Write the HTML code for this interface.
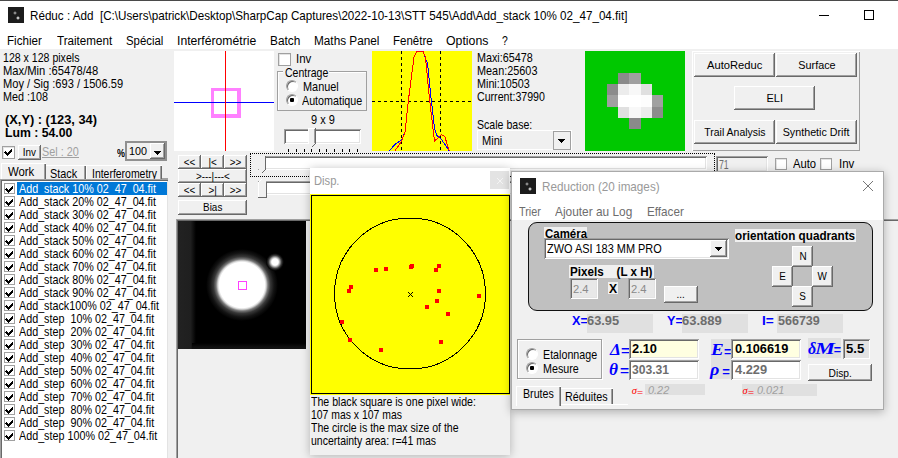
<!DOCTYPE html><html><head><meta charset="utf-8"><style>
*{margin:0;padding:0;box-sizing:border-box}
html,body{width:898px;height:458px;overflow:hidden;background:#f0f0f0;position:relative;font-family:"Liberation Sans",sans-serif;color:#000}
div,span,svg{position:absolute}
.t{white-space:pre;line-height:1}
.btn{background:#f0f0f0;box-shadow:inset -1px -1px #696969,inset 1px 1px #fff,inset -2px -2px #a0a0a0;display:flex;align-items:center;justify-content:center}
.btn span{position:relative;display:inline-block;white-space:pre;line-height:1}
.sunk{box-shadow:inset 1px 1px #a0a0a0,inset -1px -1px #fff,inset 2px 2px #696969,inset -2px -2px #e3e3e3}
.cb{background:#fff;border:1px solid #a0a0a0;box-shadow:inset 1px 1px #e3e3e3}
.rad{width:12px;height:12px;border-radius:6px;background:#fff;border:1px solid;border-color:#a0a0a0 #fff #fff #a0a0a0;box-shadow:inset 1px 1px #696969}
.etch{border:1px solid #a0a0a0;box-shadow:inset 1px 1px #fff,1px 1px #fff}
</style></head><body>
<div class="" style="left:0px;top:0px;width:898px;height:49px;background:#fff"></div>
<div class="" style="left:0px;top:0px;width:898px;height:1px;background:#4a4a4a"></div>
<div class="" style="left:8px;top:7px;width:16px;height:16px;background:#1c1c1c"></div>
<div style="left:12.8px;top:10.9px;width:4px;height:4px;border-radius:2px;background:radial-gradient(circle closest-side,#bbb,#666 60%,#1c1c1c)"></div>
<div style="left:15.5px;top:15.7px;width:4px;height:4px;border-radius:2px;background:radial-gradient(circle closest-side,#fff,#999 60%,#1c1c1c)"></div>
<div class="t" style="left:29.5px;top:10.00px;font-size:12.4px;transform:scaleX(0.94);transform-origin:0 0;">Réduc : Add  [C:\Users\patrick\Desktop\SharpCap Captures\2022-10-13\STT 545\Add\Add_stack 10% 02_47_04.fit]</div>
<div class="" style="left:819px;top:15px;width:10px;height:1px;background:#000"></div>
<div class="" style="left:864px;top:10px;width:10px;height:10px;border:1px solid #000"></div>
<div class="t" style="left:7.4px;top:35.09px;font-size:12.3px;transform:scaleX(0.943);transform-origin:0 0;">Fichier</div>
<div class="t" style="left:57.0px;top:35.09px;font-size:12.3px;transform:scaleX(0.9464);transform-origin:0 0;">Traitement</div>
<div class="t" style="left:126.0px;top:35.09px;font-size:12.3px;transform:scaleX(0.9246);transform-origin:0 0;">Spécial</div>
<div class="t" style="left:177.2px;top:35.09px;font-size:12.3px;transform:scaleX(0.9903);transform-origin:0 0;">Interférométrie</div>
<div class="t" style="left:270.2px;top:35.09px;font-size:12.3px;transform:scaleX(0.9634);transform-origin:0 0;">Batch</div>
<div class="t" style="left:314px;top:35.09px;font-size:12.3px;transform:scaleX(0.9581);transform-origin:0 0;">Maths Panel</div>
<div class="t" style="left:393.3px;top:35.09px;font-size:12.3px;transform:scaleX(0.9343);transform-origin:0 0;">Fenêtre</div>
<div class="t" style="left:446.3px;top:35.09px;font-size:12.3px;transform:scaleX(1.0003);transform-origin:0 0;">Options</div>
<div class="t" style="left:502px;top:35.09px;font-size:12.3px;transform:scaleX(0.848);transform-origin:0 0;">?</div>
<div class="t" style="left:3px;top:52.17px;font-size:12.2px;transform:scaleX(0.8677);transform-origin:0 0;">128 x 128 pixels</div>
<div class="t" style="left:3px;top:65.17px;font-size:12.2px;transform:scaleX(0.9185);transform-origin:0 0;">Max/Min :65478/48</div>
<div class="t" style="left:3px;top:78.17px;font-size:12.2px;transform:scaleX(0.9089);transform-origin:0 0;">Moy / Sig :693 / 1506.59</div>
<div class="t" style="left:3px;top:91.17px;font-size:12.2px;transform:scaleX(0.8847);transform-origin:0 0;">Med :108</div>
<div class="t" style="left:4.8px;top:113.83px;font-size:12.6px;transform:scaleX(1.0186);transform-origin:0 0;font-weight:bold">(X,Y) : (123, 34)</div>
<div class="t" style="left:5.1px;top:126.83px;font-size:12.6px;transform:scaleX(0.9723);transform-origin:0 0;font-weight:bold">Lum : 54.00</div>
<div class="cb" style="left:2px;top:146px;width:13px;height:13px"><svg width="9" height="9" viewBox="0 0 9 9" style="position:absolute;left:1px;top:0px" shape-rendering="crispEdges"><path d="M1 4h1v1h1v1h1v-1h1v-1h1v-1h1v-1h1v3h-1v1h-1v1h-1v1h-1v1h-1v-1h-1v-1h-1v-1h-1z" fill="#000"/></svg></div>
<div class="btn" style="left:18px;top:145px;width:23px;height:15px;"><span style="font-size:11px;transform:scaleX(0.9);position:relative;top:0px;">Inv</span></div>
<div class="t" style="left:42.3px;top:146.17px;font-size:12.2px;transform:scaleX(0.8871);transform-origin:0 0;color:#a0a0a0">Sel : 20</div>
<div class="" style="left:42px;top:157px;width:37px;height:1px;background:#a0a0a0"></div>
<div class="t" style="left:116.5px;top:147.61px;font-size:10.5px;transform:scaleX(0.85);transform-origin:0 0;font-weight:bold">%</div>
<div class="" style="left:125px;top:141px;width:42px;height:20px;background:#f0f0f0;box-shadow:inset 2px 2px #909090,inset -2px -2px #909090"></div>
<div class="t" style="left:128.7px;top:145.85px;font-size:11.4px;transform:scaleX(0.9465);transform-origin:0 0;">100</div>
<div class="" style="left:150px;top:143px;width:15px;height:16px;background:#f0f0f0;box-shadow:inset -1px -1px #696969,inset 1px 1px #fff,inset -2px -2px #a0a0a0"></div>
<svg style="left:154px;top:151px" width="7" height="4" viewBox="0 0 7 4" shape-rendering="crispEdges"><path d="M0 0h7v1h-1v1h-1v1h-1v1h-1v-1h-1v-1h-1v-1h-1z"/></svg>
<div style="left:45px;top:165px;width:41px;height:15px;background:#f0f0f0;box-shadow:inset 1px 1px #fff,inset -1px 0 #696969,inset -2px 0 #a0a0a0"></div>
<div class="t" style="left:50.3px;top:168.17px;font-size:12.2px;transform:scaleX(0.8915);transform-origin:0 0;">Stack</div>
<div style="left:86px;top:165px;width:76px;height:15px;background:#f0f0f0;box-shadow:inset 1px 1px #fff,inset -1px 0 #696969,inset -2px 0 #a0a0a0"></div>
<div class="t" style="left:91.9px;top:168.17px;font-size:12.2px;transform:scaleX(0.8574);transform-origin:0 0;">Interferometry</div>
<div style="left:162px;top:178px;width:6px;height:1px;background:#a0a0a0"></div>
<div style="left:1px;top:163px;width:45px;height:17px;background:#f0f0f0;box-shadow:inset 1px 1px #fff,inset -1px 0 #696969,inset -2px 0 #a0a0a0"></div>
<div class="t" style="left:8.1px;top:166.17px;font-size:12.2px;transform:scaleX(0.9313);transform-origin:0 0;">Work</div>
<div style="left:0px;top:179px;width:168px;height:290px;background:#fff;box-shadow:inset 1px 1px #a0a0a0,inset 2px 2px #696969,inset -1px 0 #e3e3e3"></div>
<div class="" style="left:17px;top:182px;width:150px;height:13px;background:#0078d7"></div>
<div style="left:4px;top:183px;width:11px;height:11px;background:#fff;border:1px solid #a0a0a0"><svg width="9" height="9" viewBox="0 0 9 9" style="position:absolute;left:0px;top:0px" shape-rendering="crispEdges"><path d="M1 4h1v1h1v1h1v-1h1v-1h1v-1h1v-1h1v3h-1v1h-1v1h-1v1h-1v1h-1v-1h-1v-1h-1v-1h-1z" fill="#000"/></svg></div>
<div class="t" style="left:18.6px;top:183.17px;font-size:12.2px;transform:scaleX(0.8827);transform-origin:0 0;color:#fff">Add_stack 10% 02_47_04.fit</div>
<div style="left:4px;top:196px;width:11px;height:11px;background:#fff;border:1px solid #a0a0a0"><svg width="9" height="9" viewBox="0 0 9 9" style="position:absolute;left:0px;top:0px" shape-rendering="crispEdges"><path d="M1 4h1v1h1v1h1v-1h1v-1h1v-1h1v-1h1v3h-1v1h-1v1h-1v1h-1v1h-1v-1h-1v-1h-1v-1h-1z" fill="#000"/></svg></div>
<div class="t" style="left:18.6px;top:196.17px;font-size:12.2px;transform:scaleX(0.8827);transform-origin:0 0;color:#000">Add_stack 20% 02_47_04.fit</div>
<div style="left:4px;top:209px;width:11px;height:11px;background:#fff;border:1px solid #a0a0a0"><svg width="9" height="9" viewBox="0 0 9 9" style="position:absolute;left:0px;top:0px" shape-rendering="crispEdges"><path d="M1 4h1v1h1v1h1v-1h1v-1h1v-1h1v-1h1v3h-1v1h-1v1h-1v1h-1v1h-1v-1h-1v-1h-1v-1h-1z" fill="#000"/></svg></div>
<div class="t" style="left:18.6px;top:209.17px;font-size:12.2px;transform:scaleX(0.8827);transform-origin:0 0;color:#000">Add_stack 30% 02_47_04.fit</div>
<div style="left:4px;top:222px;width:11px;height:11px;background:#fff;border:1px solid #a0a0a0"><svg width="9" height="9" viewBox="0 0 9 9" style="position:absolute;left:0px;top:0px" shape-rendering="crispEdges"><path d="M1 4h1v1h1v1h1v-1h1v-1h1v-1h1v-1h1v3h-1v1h-1v1h-1v1h-1v1h-1v-1h-1v-1h-1v-1h-1z" fill="#000"/></svg></div>
<div class="t" style="left:18.6px;top:222.17px;font-size:12.2px;transform:scaleX(0.8827);transform-origin:0 0;color:#000">Add_stack 40% 02_47_04.fit</div>
<div style="left:4px;top:235px;width:11px;height:11px;background:#fff;border:1px solid #a0a0a0"><svg width="9" height="9" viewBox="0 0 9 9" style="position:absolute;left:0px;top:0px" shape-rendering="crispEdges"><path d="M1 4h1v1h1v1h1v-1h1v-1h1v-1h1v-1h1v3h-1v1h-1v1h-1v1h-1v1h-1v-1h-1v-1h-1v-1h-1z" fill="#000"/></svg></div>
<div class="t" style="left:18.6px;top:235.17px;font-size:12.2px;transform:scaleX(0.8827);transform-origin:0 0;color:#000">Add_stack 50% 02_47_04.fit</div>
<div style="left:4px;top:248px;width:11px;height:11px;background:#fff;border:1px solid #a0a0a0"><svg width="9" height="9" viewBox="0 0 9 9" style="position:absolute;left:0px;top:0px" shape-rendering="crispEdges"><path d="M1 4h1v1h1v1h1v-1h1v-1h1v-1h1v-1h1v3h-1v1h-1v1h-1v1h-1v1h-1v-1h-1v-1h-1v-1h-1z" fill="#000"/></svg></div>
<div class="t" style="left:18.6px;top:248.17px;font-size:12.2px;transform:scaleX(0.8827);transform-origin:0 0;color:#000">Add_stack 60% 02_47_04.fit</div>
<div style="left:4px;top:261px;width:11px;height:11px;background:#fff;border:1px solid #a0a0a0"><svg width="9" height="9" viewBox="0 0 9 9" style="position:absolute;left:0px;top:0px" shape-rendering="crispEdges"><path d="M1 4h1v1h1v1h1v-1h1v-1h1v-1h1v-1h1v3h-1v1h-1v1h-1v1h-1v1h-1v-1h-1v-1h-1v-1h-1z" fill="#000"/></svg></div>
<div class="t" style="left:18.6px;top:261.17px;font-size:12.2px;transform:scaleX(0.8827);transform-origin:0 0;color:#000">Add_stack 70% 02_47_04.fit</div>
<div style="left:4px;top:274px;width:11px;height:11px;background:#fff;border:1px solid #a0a0a0"><svg width="9" height="9" viewBox="0 0 9 9" style="position:absolute;left:0px;top:0px" shape-rendering="crispEdges"><path d="M1 4h1v1h1v1h1v-1h1v-1h1v-1h1v-1h1v3h-1v1h-1v1h-1v1h-1v1h-1v-1h-1v-1h-1v-1h-1z" fill="#000"/></svg></div>
<div class="t" style="left:18.6px;top:274.17px;font-size:12.2px;transform:scaleX(0.8827);transform-origin:0 0;color:#000">Add_stack 80% 02_47_04.fit</div>
<div style="left:4px;top:287px;width:11px;height:11px;background:#fff;border:1px solid #a0a0a0"><svg width="9" height="9" viewBox="0 0 9 9" style="position:absolute;left:0px;top:0px" shape-rendering="crispEdges"><path d="M1 4h1v1h1v1h1v-1h1v-1h1v-1h1v-1h1v3h-1v1h-1v1h-1v1h-1v1h-1v-1h-1v-1h-1v-1h-1z" fill="#000"/></svg></div>
<div class="t" style="left:18.6px;top:287.17px;font-size:12.2px;transform:scaleX(0.8827);transform-origin:0 0;color:#000">Add_stack 90% 02_47_04.fit</div>
<div style="left:4px;top:300px;width:11px;height:11px;background:#fff;border:1px solid #a0a0a0"><svg width="9" height="9" viewBox="0 0 9 9" style="position:absolute;left:0px;top:0px" shape-rendering="crispEdges"><path d="M1 4h1v1h1v1h1v-1h1v-1h1v-1h1v-1h1v3h-1v1h-1v1h-1v1h-1v1h-1v-1h-1v-1h-1v-1h-1z" fill="#000"/></svg></div>
<div class="t" style="left:18.6px;top:300.17px;font-size:12.2px;transform:scaleX(0.8827);transform-origin:0 0;color:#000">Add_stack100% 02_47_04.fit</div>
<div style="left:4px;top:313px;width:11px;height:11px;background:#fff;border:1px solid #a0a0a0"><svg width="9" height="9" viewBox="0 0 9 9" style="position:absolute;left:0px;top:0px" shape-rendering="crispEdges"><path d="M1 4h1v1h1v1h1v-1h1v-1h1v-1h1v-1h1v3h-1v1h-1v1h-1v1h-1v1h-1v-1h-1v-1h-1v-1h-1z" fill="#000"/></svg></div>
<div class="t" style="left:18.6px;top:313.17px;font-size:12.2px;transform:scaleX(0.8827);transform-origin:0 0;color:#000">Add_step  10% 02_47_04.fit</div>
<div style="left:4px;top:326px;width:11px;height:11px;background:#fff;border:1px solid #a0a0a0"><svg width="9" height="9" viewBox="0 0 9 9" style="position:absolute;left:0px;top:0px" shape-rendering="crispEdges"><path d="M1 4h1v1h1v1h1v-1h1v-1h1v-1h1v-1h1v3h-1v1h-1v1h-1v1h-1v1h-1v-1h-1v-1h-1v-1h-1z" fill="#000"/></svg></div>
<div class="t" style="left:18.6px;top:326.17px;font-size:12.2px;transform:scaleX(0.8827);transform-origin:0 0;color:#000">Add_step  20% 02_47_04.fit</div>
<div style="left:4px;top:339px;width:11px;height:11px;background:#fff;border:1px solid #a0a0a0"><svg width="9" height="9" viewBox="0 0 9 9" style="position:absolute;left:0px;top:0px" shape-rendering="crispEdges"><path d="M1 4h1v1h1v1h1v-1h1v-1h1v-1h1v-1h1v3h-1v1h-1v1h-1v1h-1v1h-1v-1h-1v-1h-1v-1h-1z" fill="#000"/></svg></div>
<div class="t" style="left:18.6px;top:339.17px;font-size:12.2px;transform:scaleX(0.8827);transform-origin:0 0;color:#000">Add_step  30% 02_47_04.fit</div>
<div style="left:4px;top:352px;width:11px;height:11px;background:#fff;border:1px solid #a0a0a0"><svg width="9" height="9" viewBox="0 0 9 9" style="position:absolute;left:0px;top:0px" shape-rendering="crispEdges"><path d="M1 4h1v1h1v1h1v-1h1v-1h1v-1h1v-1h1v3h-1v1h-1v1h-1v1h-1v1h-1v-1h-1v-1h-1v-1h-1z" fill="#000"/></svg></div>
<div class="t" style="left:18.6px;top:352.17px;font-size:12.2px;transform:scaleX(0.8827);transform-origin:0 0;color:#000">Add_step  40% 02_47_04.fit</div>
<div style="left:4px;top:365px;width:11px;height:11px;background:#fff;border:1px solid #a0a0a0"><svg width="9" height="9" viewBox="0 0 9 9" style="position:absolute;left:0px;top:0px" shape-rendering="crispEdges"><path d="M1 4h1v1h1v1h1v-1h1v-1h1v-1h1v-1h1v3h-1v1h-1v1h-1v1h-1v1h-1v-1h-1v-1h-1v-1h-1z" fill="#000"/></svg></div>
<div class="t" style="left:18.6px;top:365.17px;font-size:12.2px;transform:scaleX(0.8827);transform-origin:0 0;color:#000">Add_step  50% 02_47_04.fit</div>
<div style="left:4px;top:378px;width:11px;height:11px;background:#fff;border:1px solid #a0a0a0"><svg width="9" height="9" viewBox="0 0 9 9" style="position:absolute;left:0px;top:0px" shape-rendering="crispEdges"><path d="M1 4h1v1h1v1h1v-1h1v-1h1v-1h1v-1h1v3h-1v1h-1v1h-1v1h-1v1h-1v-1h-1v-1h-1v-1h-1z" fill="#000"/></svg></div>
<div class="t" style="left:18.6px;top:378.17px;font-size:12.2px;transform:scaleX(0.8827);transform-origin:0 0;color:#000">Add_step  60% 02_47_04.fit</div>
<div style="left:4px;top:391px;width:11px;height:11px;background:#fff;border:1px solid #a0a0a0"><svg width="9" height="9" viewBox="0 0 9 9" style="position:absolute;left:0px;top:0px" shape-rendering="crispEdges"><path d="M1 4h1v1h1v1h1v-1h1v-1h1v-1h1v-1h1v3h-1v1h-1v1h-1v1h-1v1h-1v-1h-1v-1h-1v-1h-1z" fill="#000"/></svg></div>
<div class="t" style="left:18.6px;top:391.17px;font-size:12.2px;transform:scaleX(0.8827);transform-origin:0 0;color:#000">Add_step  70% 02_47_04.fit</div>
<div style="left:4px;top:404px;width:11px;height:11px;background:#fff;border:1px solid #a0a0a0"><svg width="9" height="9" viewBox="0 0 9 9" style="position:absolute;left:0px;top:0px" shape-rendering="crispEdges"><path d="M1 4h1v1h1v1h1v-1h1v-1h1v-1h1v-1h1v3h-1v1h-1v1h-1v1h-1v1h-1v-1h-1v-1h-1v-1h-1z" fill="#000"/></svg></div>
<div class="t" style="left:18.6px;top:404.17px;font-size:12.2px;transform:scaleX(0.8827);transform-origin:0 0;color:#000">Add_step  80% 02_47_04.fit</div>
<div style="left:4px;top:417px;width:11px;height:11px;background:#fff;border:1px solid #a0a0a0"><svg width="9" height="9" viewBox="0 0 9 9" style="position:absolute;left:0px;top:0px" shape-rendering="crispEdges"><path d="M1 4h1v1h1v1h1v-1h1v-1h1v-1h1v-1h1v3h-1v1h-1v1h-1v1h-1v1h-1v-1h-1v-1h-1v-1h-1z" fill="#000"/></svg></div>
<div class="t" style="left:18.6px;top:417.17px;font-size:12.2px;transform:scaleX(0.8827);transform-origin:0 0;color:#000">Add_step  90% 02_47_04.fit</div>
<div style="left:4px;top:430px;width:11px;height:11px;background:#fff;border:1px solid #a0a0a0"><svg width="9" height="9" viewBox="0 0 9 9" style="position:absolute;left:0px;top:0px" shape-rendering="crispEdges"><path d="M1 4h1v1h1v1h1v-1h1v-1h1v-1h1v-1h1v3h-1v1h-1v1h-1v1h-1v1h-1v-1h-1v-1h-1v-1h-1z" fill="#000"/></svg></div>
<div class="t" style="left:18.6px;top:430.17px;font-size:12.2px;transform:scaleX(0.8827);transform-origin:0 0;color:#000">Add_step 100% 02_47_04.fit</div>
<div class="" style="left:174px;top:51px;width:100px;height:100px;background:#fff"></div>
<div class="" style="left:211px;top:88px;width:30px;height:30px;border:3px solid #ff80ff;border-right-width:4px;border-bottom-width:4px"></div>
<div class="" style="left:174px;top:102px;width:100px;height:1px;background:#0000ff"></div>
<div class="" style="left:225px;top:51px;width:1px;height:100px;background:#ff0000"></div>
<div class="cb" style="left:278px;top:53px;width:13px;height:13px"></div>
<div class="t" style="left:296.2px;top:52.77px;font-size:12.2px;transform:scaleX(0.9402);transform-origin:0 0;">Inv</div>
<div class="" style="left:277px;top:71px;width:90px;height:40px;border:1px solid #a0a0a0;box-shadow:inset 1px 1px #fff"></div>
<div class="" style="left:283px;top:69px;width:46px;height:10px;background:#f0f0f0"></div>
<div class="t" style="left:285.2px;top:67.17px;font-size:12.2px;transform:scaleX(0.8628);transform-origin:0 0;">Centrage</div>
<div class="rad" style="left:286px;top:80px"></div>
<div class="t" style="left:303.2px;top:81.17px;font-size:12.2px;transform:scaleX(0.8948);transform-origin:0 0;">Manuel</div>
<div class="rad" style="left:286px;top:94px"><div style="position:absolute;left:3px;top:3px;width:4px;height:4px;border-radius:1px;background:#000"></div></div>
<div class="t" style="left:302.3px;top:95.17px;font-size:12.2px;transform:scaleX(0.8804);transform-origin:0 0;">Automatique</div>
<div class="t" style="left:311.1px;top:113.57px;font-size:12.2px;transform:scaleX(0.8999);transform-origin:0 0;">9 x 9</div>
<div class="sunk" style="left:284px;top:129px;width:77px;height:15px;background:#fff;"></div>
<div style="left:308px;top:128px;width:9px;height:20px"><svg width="9" height="20" viewBox="0 0 9 20" style="position:static" shape-rendering="crispEdges"><path d="M0 0h8v15l-4 4l-4-4z" fill="#f0f0f0"/><path d="M0 0h7v1h-6v14h-1z" fill="#fff"/><path d="M6 1h1v14h-1z" fill="#a0a0a0"/><path d="M7 0h1v15l-4 4h-1l4-4z" fill="#696969"/></svg></div>
<div class="" style="left:288px;top:149px;width:1px;height:3px;background:#000"></div>
<div class="" style="left:296px;top:149px;width:1px;height:3px;background:#000"></div>
<div class="" style="left:304px;top:149px;width:1px;height:3px;background:#000"></div>
<div class="" style="left:311px;top:149px;width:1px;height:3px;background:#000"></div>
<div class="" style="left:319px;top:149px;width:1px;height:3px;background:#000"></div>
<div class="" style="left:326px;top:149px;width:1px;height:3px;background:#000"></div>
<div class="" style="left:334px;top:149px;width:1px;height:3px;background:#000"></div>
<div class="" style="left:342px;top:149px;width:1px;height:3px;background:#000"></div>
<div class="" style="left:349px;top:149px;width:1px;height:3px;background:#000"></div>
<div class="" style="left:357px;top:149px;width:1px;height:3px;background:#000"></div>
<svg style="left:372px;top:51px" width="100" height="100" viewBox="372 51 100 100">
<rect x="372" y="51" width="100" height="100" fill="#ffff00"/>
<line x1="372" y1="101.5" x2="472" y2="101.5" stroke="#000" stroke-dasharray="3 3"/>
<line x1="401.5" y1="51" x2="401.5" y2="151" stroke="#000" stroke-dasharray="3 3" stroke-dashoffset="-42"/>
<line x1="440.5" y1="51" x2="440.5" y2="151" stroke="#000" stroke-dasharray="3 3" stroke-dashoffset="-42"/>
<polyline fill="none" stroke="#0000ff" stroke-width="1" shape-rendering="crispEdges" points="389,151 396,143.5 401.6,140 405,132 408.4,100.3 414,57 416.4,51.8 423.2,51.8 427.6,64 430.5,93 434.4,127.5 436.7,135.5 441.2,139 449.3,151"/>
<polyline fill="none" stroke="#ff0000" stroke-width="1" shape-rendering="crispEdges" points="394.8,151 401.6,141.2 405,132 408.4,100.3 414,57 416.4,51.8 423.2,51.8 425.5,57 428.9,93.5 431,111.6 434.5,141.2 441.4,134.4 444.8,136.6 449.3,151"/>
</svg>
<div class="t" style="left:477.1px;top:51.57px;font-size:12.2px;transform:scaleX(0.8848);transform-origin:0 0;">Maxi:65478</div>
<div class="t" style="left:477.1px;top:64.67px;font-size:12.2px;transform:scaleX(0.892);transform-origin:0 0;">Mean:25603</div>
<div class="t" style="left:477.1px;top:77.77px;font-size:12.2px;transform:scaleX(0.8847);transform-origin:0 0;">Mini:10503</div>
<div class="t" style="left:477.1px;top:90.87px;font-size:12.2px;transform:scaleX(0.8719);transform-origin:0 0;">Current:37990</div>
<div class="t" style="left:477.1px;top:118.77px;font-size:12.2px;transform:scaleX(0.8675);transform-origin:0 0;">Scale base:</div>
<div class="" style="left:477px;top:130px;width:95px;height:20px;background:#f0f0f0;border:1px solid #fff"></div>
<div class="t" style="left:481.6px;top:135.17px;font-size:12.2px;transform:scaleX(0.9075);transform-origin:0 0;">Mini</div>
<div class="" style="left:553px;top:131px;width:18px;height:19px;border:1px solid #a0a0a0;background:#f0f0f0"></div>
<svg style="left:558px;top:139px" width="7" height="4" viewBox="0 0 7 4" shape-rendering="crispEdges"><path d="M0 0h7v1h-1v1h-1v1h-1v1h-1v-1h-1v-1h-1v-1h-1z"/></svg>
<div class="" style="left:585px;top:51px;width:100px;height:100px;background:#00c800"></div>
<div class="" style="left:618px;top:73px;width:11px;height:11px;background:#8a8a8a"></div>
<div class="" style="left:629px;top:73px;width:12px;height:11px;background:#a0a0a0"></div>
<div class="" style="left:607px;top:84px;width:11px;height:11px;background:#8c8c8c"></div>
<div class="" style="left:618px;top:84px;width:11px;height:11px;background:#ececec"></div>
<div class="" style="left:629px;top:84px;width:12px;height:11px;background:#f8f8f8"></div>
<div class="" style="left:641px;top:84px;width:11px;height:11px;background:#e0e0e0"></div>
<div class="" style="left:607px;top:95px;width:11px;height:12px;background:#a0a0a0"></div>
<div class="" style="left:618px;top:95px;width:11px;height:12px;background:#fff"></div>
<div class="" style="left:629px;top:95px;width:12px;height:12px;background:#fff"></div>
<div class="" style="left:641px;top:95px;width:11px;height:12px;background:#fdfdfd"></div>
<div class="" style="left:652px;top:95px;width:11px;height:12px;background:#a0a0a0"></div>
<div class="" style="left:618px;top:107px;width:11px;height:11px;background:#e0e0e0"></div>
<div class="" style="left:629px;top:107px;width:12px;height:11px;background:#f8f8f8"></div>
<div class="" style="left:641px;top:107px;width:11px;height:11px;background:#ececec"></div>
<div class="" style="left:652px;top:107px;width:11px;height:11px;background:#8c8c8c"></div>
<div class="" style="left:629px;top:118px;width:12px;height:11px;background:#8a8a8a"></div>
<div class="" style="left:692px;top:51px;width:168px;height:100px;box-shadow:inset 1px 1px #fff,inset -1px -1px #a0a0a0"></div>
<div class="btn" style="left:694px;top:53px;width:81px;height:24px;"><span style="font-size:11.6px;transform:scaleX(0.9653);position:relative;top:0px;">AutoReduc</span></div>
<div class="btn" style="left:776px;top:53px;width:81px;height:24px;"><span style="font-size:11.6px;transform:scaleX(0.9331);position:relative;top:0px;">Surface</span></div>
<div class="btn" style="left:734px;top:86px;width:81px;height:24px;"><span style="font-size:11.6px;transform:scaleX(0.9477);position:relative;top:0px;">ELI</span></div>
<div class="btn" style="left:694px;top:120px;width:81px;height:24px;"><span style="font-size:11.6px;transform:scaleX(0.9028);position:relative;top:0px;">Trail Analysis</span></div>
<div class="btn" style="left:776px;top:120px;width:81px;height:24px;"><span style="font-size:11.6px;transform:scaleX(0.9252);position:relative;top:0px;">Synthetic Drift</span></div>
<div class="btn" style="left:178px;top:155px;width:23px;height:14px;"><span style="font-size:11px;transform:scaleX(0.9);position:relative;top:0px;">&lt;&lt;</span></div>
<div class="btn" style="left:201px;top:155px;width:23px;height:14px;"><span style="font-size:11px;transform:scaleX(0.9);position:relative;top:0px;">|&lt;</span></div>
<div class="btn" style="left:224px;top:155px;width:23px;height:14px;"><span style="font-size:11px;transform:scaleX(0.9);position:relative;top:0px;">&gt;&gt;</span></div>
<div class="btn" style="left:178px;top:169px;width:69px;height:14px;"><span style="font-size:11px;transform:scaleX(0.9);position:relative;top:0px;">&gt;---|---&lt;</span></div>
<div class="btn" style="left:178px;top:183px;width:23px;height:14px;"><span style="font-size:11px;transform:scaleX(0.9);position:relative;top:0px;">&lt;&lt;</span></div>
<div class="btn" style="left:201px;top:183px;width:23px;height:14px;"><span style="font-size:11px;transform:scaleX(0.9);position:relative;top:0px;">&gt;|</span></div>
<div class="btn" style="left:224px;top:183px;width:23px;height:14px;"><span style="font-size:11px;transform:scaleX(0.9);position:relative;top:0px;">&gt;&gt;</span></div>
<div class="btn" style="left:178px;top:200px;width:69px;height:15px;"><span style="font-size:11px;transform:scaleX(0.9);position:relative;top:0px;">Bias</span></div>
<div class="" style="left:250px;top:153px;width:465px;height:24px;border:1px dotted #000"></div>
<div class="sunk" style="left:258px;top:156px;width:449px;height:14px;background:#fff;"></div>
<div class="sunk" style="left:258px;top:181px;width:449px;height:14px;background:#fff;"></div>
<svg style="left:258px;top:156px" width="9" height="42" viewBox="0 0 9 42" shape-rendering="crispEdges"><path d="M0 0h8v13l-4 4l-4-4z" fill="#f0f0f0"/><path d="M7 0h1v13l-4 4h-1l4-4z" fill="#696969"/><path d="M4 22l4 4v15h-8v-15z" fill="#f0f0f0"/><path d="M4 22l4 4v15h-8v1h9v-16z" fill="#696969"/><path d="M0 26l4-4v1l-3 3v15h-1z" fill="#fff"/></svg>
<div class="sunk" style="left:716px;top:156px;width:52px;height:16px;background:#f0f0f0;"></div>
<div class="t" style="left:719px;top:159.17px;font-size:12.2px;transform:scaleX(0.7149);transform-origin:0 0;color:#6d6d6d">71</div>
<div class="cb" style="left:775px;top:158px;width:12px;height:12px"></div>
<div class="t" style="left:792.8px;top:158.17px;font-size:12.2px;transform:scaleX(0.9205);transform-origin:0 0;">Auto</div>
<div class="cb" style="left:820px;top:158px;width:12px;height:12px"></div>
<div class="t" style="left:838.6px;top:158.17px;font-size:12.2px;transform:scaleX(0.9402);transform-origin:0 0;">Inv</div>
<div style="left:176px;top:219px;width:730px;height:240px;box-shadow:inset 1px 1px #a0a0a0,inset 2px 2px #696969"></div>
<div style="left:178px;top:221px;width:128px;height:128px;background:#000;overflow:hidden">
<div style="left:0;top:0;width:18px;height:128px;background:linear-gradient(90deg,#222 0,#1f1f1f 70%,#000 100%)"></div>
<div style="left:14px;top:122px;width:114px;height:6px;background:linear-gradient(180deg,#000,#111 70%,#131313)"></div>
<div style="left:28px;top:28px;width:72px;height:72px;border-radius:50%;background:radial-gradient(circle closest-side,#fff 0,#fff 63%,#d8d8d8 67%,#787878 72%,#383838 79%,#141414 89%,#000 100%)"></div>
<div style="left:88px;top:32px;width:18px;height:18px;border-radius:50%;background:radial-gradient(circle closest-side,#fff 0,#fff 36%,#b0b0b0 52%,#404040 72%,#101010 88%,#000 100%)"></div>
<div style="left:60px;top:60px;width:9px;height:9px;border:1px solid #ff40ff"></div>
</div>
<div style="left:310px;top:168px;width:200px;height:287px;background:#f0f0f0;box-shadow:0 1px 9px rgba(0,0,0,0.26)"></div>
<div class="" style="left:310px;top:168px;width:200px;height:26px;background:#fff"></div>
<div class="t" style="left:313.5px;top:175.00px;font-size:12.4px;transform:scaleX(0.9026);transform-origin:0 0;color:#999">Disp.</div>
<div class="" style="left:490px;top:171px;width:19px;height:18px;background:#e3e3e3"></div>
<svg style="left:496px;top:177px" width="8" height="8" viewBox="0 0 8 8"><path d="M1 1l6 6M7 1l-6 6" stroke="#f4f4f4" stroke-width="1"/></svg>
<svg style="left:310px;top:194px" width="201" height="201" viewBox="310 194 201 201" shape-rendering="crispEdges">
<rect x="310" y="194" width="200" height="201" fill="#ffff00"/>
<rect x="311.5" y="195.5" width="198" height="198" fill="#ffff00" stroke="#000"/>
<circle cx="410" cy="293.5" r="75.5" fill="none" stroke="#000" stroke-width="1"/>
<path d="M408 292l5 5M413 292l-5 5" stroke="#000" stroke-width="1" fill="none" shape-rendering="auto"/>
<rect x="374" y="268" width="4" height="4" fill="#ff0000"/><rect x="384" y="267" width="4" height="4" fill="#ff0000"/><rect x="409" y="265" width="4" height="4" fill="#ff0000"/><rect x="410" y="264" width="4" height="4" fill="#ff0000"/><rect x="349" y="285" width="4" height="4" fill="#ff0000"/><rect x="347" y="289" width="4" height="4" fill="#ff0000"/><rect x="437" y="264" width="4" height="4" fill="#ff0000"/><rect x="434" y="268" width="4" height="4" fill="#ff0000"/><rect x="437" y="289" width="4" height="4" fill="#ff0000"/><rect x="477" y="294" width="4" height="4" fill="#ff0000"/><rect x="435" y="299" width="4" height="4" fill="#ff0000"/><rect x="425" y="305" width="4" height="4" fill="#ff0000"/><rect x="446" y="312" width="4" height="4" fill="#ff0000"/><rect x="340" y="320" width="4" height="4" fill="#ff0000"/><rect x="348" y="338" width="4" height="4" fill="#ff0000"/><rect x="379" y="348" width="4" height="4" fill="#ff0000"/><rect x="439" y="340" width="4" height="4" fill="#ff0000"/></svg>
<div class="t" style="left:310.6px;top:396.17px;font-size:12.2px;transform:scaleX(0.8696);transform-origin:0 0;">The black square is one pixel wide:</div>
<div class="t" style="left:310.6px;top:408.87px;font-size:12.2px;transform:scaleX(0.8548);transform-origin:0 0;">107 mas x 107 mas</div>
<div class="t" style="left:310.6px;top:421.67px;font-size:12.2px;transform:scaleX(0.8645);transform-origin:0 0;">The circle is the max size of the</div>
<div class="t" style="left:310.6px;top:434.67px;font-size:12.2px;transform:scaleX(0.8601);transform-origin:0 0;">uncertainty area: r=41 mas</div>
<div style="left:511px;top:171px;width:373px;height:239px;background:#f0f0f0;border:1px solid #aaa;box-shadow:0 2px 9px rgba(0,0,0,0.28)"></div>
<div class="" style="left:512px;top:172px;width:371px;height:48px;background:#fff"></div>
<div class="" style="left:520px;top:178px;width:16px;height:16px;background:#1c1c1c"></div>
<div style="left:524.8px;top:181.9px;width:4px;height:4px;border-radius:2px;background:radial-gradient(circle closest-side,#bbb,#666 60%,#1c1c1c)"></div>
<div style="left:527.5px;top:186.7px;width:4px;height:4px;border-radius:2px;background:radial-gradient(circle closest-side,#fff,#999 60%,#1c1c1c)"></div>
<div class="t" style="left:541.6px;top:181.00px;font-size:12.4px;transform:scaleX(0.9435);transform-origin:0 0;color:#999">Reduction (20 images)</div>
<svg style="left:862px;top:180px" width="12" height="12" viewBox="0 0 12 12"><path d="M1 1l10 10M11 1l-10 10" stroke="#777" stroke-width="1"/></svg>
<div class="t" style="left:519.4px;top:206.00px;font-size:12.4px;transform:scaleX(0.8712);transform-origin:0 0;color:#6d6d6d">Trier</div>
<div class="t" style="left:555.3px;top:206.00px;font-size:12.4px;transform:scaleX(0.9584);transform-origin:0 0;color:#6d6d6d">Ajouter au Log</div>
<div class="t" style="left:647px;top:206.00px;font-size:12.4px;transform:scaleX(0.9422);transform-origin:0 0;color:#6d6d6d">Effacer</div>
<div class="" style="left:528px;top:222px;width:345px;height:89px;background:#c0c0c0;border:1.5px solid #111;border-radius:9px"></div>
<div class="" style="left:544px;top:227px;width:43px;height:11px;background:#f0f0f0"></div>
<div class="t" style="left:544.5px;top:228.09px;font-size:12.3px;transform:scaleX(0.9329);transform-origin:0 0;font-weight:bold">Caméra</div>
<div class="sunk" style="left:544px;top:238px;width:185px;height:21px;background:#fff;"></div>
<div class="t" style="left:547px;top:242.77px;font-size:12.2px;transform:scaleX(0.896);transform-origin:0 0;">ZWO ASI 183 MM PRO</div>
<div class="" style="left:710px;top:240px;width:17px;height:17px;background:#f0f0f0;box-shadow:inset -1px -1px #696969,inset 1px 1px #fff,inset -2px -2px #a0a0a0"></div>
<svg style="left:715px;top:247px" width="7" height="4" viewBox="0 0 7 4" shape-rendering="crispEdges"><path d="M0 0h7v1h-1v1h-1v1h-1v1h-1v-1h-1v-1h-1v-1h-1z"/></svg>
<div class="" style="left:735px;top:229px;width:121px;height:13px;background:#f0f0f0"></div>
<div class="t" style="left:735.1px;top:229.79px;font-size:12.3px;transform:scaleX(0.9501);transform-origin:0 0;font-weight:bold">orientation quadrants</div>
<div class="btn" style="left:792px;top:246px;width:21px;height:21px;"><span style="font-size:11px;transform:scaleX(0.9);position:relative;top:0px;">N</span></div>
<div class="btn" style="left:772px;top:266px;width:21px;height:21px;"><span style="font-size:11px;transform:scaleX(0.9);position:relative;top:0px;">E</span></div>
<div class="btn" style="left:812px;top:266px;width:21px;height:21px;"><span style="font-size:11px;transform:scaleX(0.9);position:relative;top:0px;">W</span></div>
<div class="btn" style="left:792px;top:286px;width:21px;height:21px;"><span style="font-size:11px;transform:scaleX(0.9);position:relative;top:0px;">S</span></div>
<div class="" style="left:569px;top:265px;width:85px;height:13px;background:#f0f0f0"></div>
<div class="t" style="left:569.6px;top:265.69px;font-size:12.3px;transform:scaleX(0.9454);transform-origin:0 0;font-weight:bold">Pixels    (L x H)</div>
<div class="sunk" style="left:570px;top:278px;width:28px;height:21px;background:#e8e8e8;"></div>
<div class="t" style="left:572.8px;top:282.88px;font-size:11.6px;transform:scaleX(0.9675);transform-origin:0 0;color:#8a8a8a">2.4</div>
<div class="" style="left:608px;top:282px;width:10px;height:12px;background:#f0f0f0"></div>
<div class="t" style="left:609.1px;top:281.70px;font-size:13px;transform:scaleX(0.9341);transform-origin:0 0;font-weight:bold">X</div>
<div class="sunk" style="left:628px;top:278px;width:28px;height:21px;background:#e8e8e8;"></div>
<div class="t" style="left:631.2px;top:282.88px;font-size:11.6px;transform:scaleX(0.9675);transform-origin:0 0;color:#8a8a8a">2.4</div>
<div class="btn" style="left:664px;top:286px;width:34px;height:17px;"><span style="font-size:11px;transform:scaleX(0.9);position:relative;top:0px;">...</span></div>
<div class="t" style="left:571.5px;top:314.87px;font-size:12.2px;transform:scaleX(1.0352);transform-origin:0 0;font-weight:bold;color:#0000ff">X=</div>
<div class="" style="left:587px;top:314px;width:66px;height:19px;background:#e0e0e0"></div>
<div class="t" style="left:587.3px;top:314.87px;font-size:12.2px;transform:scaleX(1.0548);transform-origin:0 0;font-weight:bold;color:#6d6d6d">63.95</div>
<div class="t" style="left:666.5px;top:314.87px;font-size:12.2px;transform:scaleX(1.0352);transform-origin:0 0;font-weight:bold;color:#0000ff">Y=</div>
<div class="" style="left:682px;top:314px;width:66px;height:19px;background:#e0e0e0"></div>
<div class="t" style="left:681.8px;top:314.87px;font-size:12.2px;transform:scaleX(1.0667);transform-origin:0 0;font-weight:bold;color:#6d6d6d">63.889</div>
<div class="t" style="left:762.2px;top:314.87px;font-size:12.2px;transform:scaleX(1.1222);transform-origin:0 0;font-weight:bold;color:#0000ff">I=</div>
<div class="" style="left:777px;top:314px;width:66px;height:19px;background:#e0e0e0"></div>
<div class="t" style="left:777.5px;top:314.87px;font-size:12.2px;transform:scaleX(1.0269);transform-origin:0 0;font-weight:bold;color:#6d6d6d">566739</div>
<div class="" style="left:517px;top:339px;width:85px;height:40px;border:1px solid #a0a0a0;box-shadow:inset 1px 1px #fff,1px 1px #fff"></div>
<div class="rad" style="left:526px;top:348px"></div>
<div class="t" style="left:543px;top:348.77px;font-size:12.2px;transform:scaleX(0.878);transform-origin:0 0;">Etalonnage</div>
<div class="rad" style="left:526px;top:362px"><div style="position:absolute;left:3px;top:3px;width:4px;height:4px;border-radius:1px;background:#000"></div></div>
<div class="t" style="left:543px;top:362.87px;font-size:12.2px;transform:scaleX(0.8801);transform-origin:0 0;">Mesure</div>
<div style="left:560px;top:404px;width:68px;height:1px;background:#fff"></div>
<div style="left:560px;top:388px;width:53px;height:16px;background:#f0f0f0;box-shadow:inset 1px 1px #fff,inset -1px 0 #696969,inset -2px 0 #a0a0a0"></div>
<div class="t" style="left:565.1px;top:390.87px;font-size:12.2px;transform:scaleX(0.8848);transform-origin:0 0;">Réduites</div>
<div style="left:516px;top:386px;width:45px;height:20px;background:#f0f0f0;box-shadow:inset 1px 1px #fff,inset -1px 0 #696969,inset -2px 0 #a0a0a0"></div>
<div class="t" style="left:523px;top:388.17px;font-size:12.2px;transform:scaleX(0.8736);transform-origin:0 0;">Brutes</div>
<div class="t" style="left:610.3px;top:341.96px;font-size:16px;transform:scaleX(1.08);transform-origin:0 0;font-family:'Liberation Serif',serif;font-weight:bold;font-style:italic;color:#0000ff">&Delta;</div>
<div class="t" style="left:621.3px;top:344.07px;font-size:13.5px;transform:scaleX(1.15);transform-origin:0 0;font-weight:bold;color:#0000ff">=</div>
<div class="sunk" style="left:629px;top:339px;width:70px;height:20px;background:#ffffe1;"></div>
<div class="t" style="left:632.4px;top:342.67px;font-size:12.2px;transform:scaleX(1.053);transform-origin:0 0;font-weight:bold">2.10</div>
<div class="t" style="left:609.3px;top:361.96px;font-size:16px;transform:scaleX(1.08);transform-origin:0 0;font-family:'Liberation Serif',serif;font-weight:bold;font-style:italic;color:#0000ff">&theta;</div>
<div class="t" style="left:620.3px;top:364.07px;font-size:13.5px;transform:scaleX(1.15);transform-origin:0 0;font-weight:bold;color:#0000ff">=</div>
<div class="sunk" style="left:629px;top:360px;width:70px;height:20px;background:#fff;"></div>
<div class="t" style="left:632.4px;top:364.07px;font-size:12.2px;transform:scaleX(0.9943);transform-origin:0 0;font-weight:bold;color:#6d6d6d">303.31</div>
<div class="t" style="left:631.8px;top:386.11px;font-size:10.5px;font-family:'Liberation Serif',serif;font-style:italic;color:#ff0000">&sigma;</div>
<div class="t" style="left:637.3px;top:386.96px;font-size:9.5px;transform:scaleX(1.1);transform-origin:0 0;color:#ff0000">=</div>
<div class="" style="left:645px;top:384px;width:60px;height:11px;background:#e0e0e0"></div>
<div class="t" style="left:648px;top:384.77px;font-size:11.5px;transform:scaleX(0.95);transform-origin:0 0;font-style:italic;color:#a0a0a0">0.22</div>
<div class="" style="left:711px;top:339px;width:20px;height:20px;background:#e0e0e0"></div>
<div class="t" style="left:711.3px;top:341.53px;font-size:16.5px;transform:scaleX(1.15);transform-origin:0 0;font-family:'Liberation Serif',serif;font-weight:bold;font-style:italic;color:#0000ff">E</div>
<div class="t" style="left:723.8px;top:344.50px;font-size:13px;transform:scaleX(0.95);transform-origin:0 0;font-weight:bold;color:#0000ff">=</div>
<div class="sunk" style="left:731px;top:339px;width:70px;height:20px;background:#ffffe1;"></div>
<div class="t" style="left:734.5px;top:343.17px;font-size:12.2px;transform:scaleX(1.0476);transform-origin:0 0;font-weight:bold">0.106619</div>
<div class="" style="left:711px;top:359px;width:20px;height:20px;background:#e0e0e0"></div>
<div class="t" style="left:710.3px;top:361.53px;font-size:16.5px;transform:scaleX(1.1);transform-origin:0 0;font-family:'Liberation Serif',serif;font-weight:bold;font-style:italic;color:#0000ff">&rho;</div>
<div class="t" style="left:722.3px;top:364.50px;font-size:13px;font-weight:bold;color:#0000ff">=</div>
<div class="sunk" style="left:731px;top:360px;width:70px;height:20px;background:#fff;"></div>
<div class="t" style="left:734.5px;top:364.17px;font-size:12.2px;transform:scaleX(1.0548);transform-origin:0 0;font-weight:bold;color:#6d6d6d">4.229</div>
<div class="" style="left:808px;top:338px;width:33px;height:20px;background:#e0e0e0"></div>
<div class="t" style="left:808px;top:340.96px;font-size:16px;font-family:'Liberation Serif',serif;font-weight:bold;font-style:italic;color:#0000ff">&delta;</div>
<div class="t" style="left:815px;top:340.96px;font-size:16px;transform:scaleX(1.4);transform-origin:0 0;font-family:'Liberation Serif',serif;font-weight:bold;font-style:italic;color:#0000ff">M</div>
<div class="t" style="left:833.8px;top:343.92px;font-size:12.5px;font-weight:bold;color:#0000ff">=</div>
<div class="sunk" style="left:843px;top:339px;width:27px;height:20px;background:#e3e3e3;"></div>
<div class="t" style="left:846.4px;top:342.97px;font-size:12.2px;transform:scaleX(1.0791);transform-origin:0 0;font-weight:bold">5.5</div>
<div class="btn" style="left:808px;top:364px;width:64px;height:17px;"><span style="font-size:11.6px;transform:scaleX(0.8816);position:relative;top:0px;">Disp.</span></div>
<div class="" style="left:742px;top:384px;width:12px;height:12px;background:#e0e0e0"></div>
<div class="t" style="left:742.5px;top:386.11px;font-size:10.5px;font-family:'Liberation Serif',serif;font-style:italic;color:#ff0000">&sigma;</div>
<div class="t" style="left:748px;top:386.96px;font-size:9.5px;transform:scaleX(1.1);transform-origin:0 0;color:#ff0000">=</div>
<div class="" style="left:754px;top:384px;width:63px;height:12px;background:#e0e0e0"></div>
<div class="t" style="left:757px;top:384.77px;font-size:11.5px;transform:scaleX(0.95);transform-origin:0 0;font-style:italic;color:#a0a0a0">0.021</div>
</body></html>
